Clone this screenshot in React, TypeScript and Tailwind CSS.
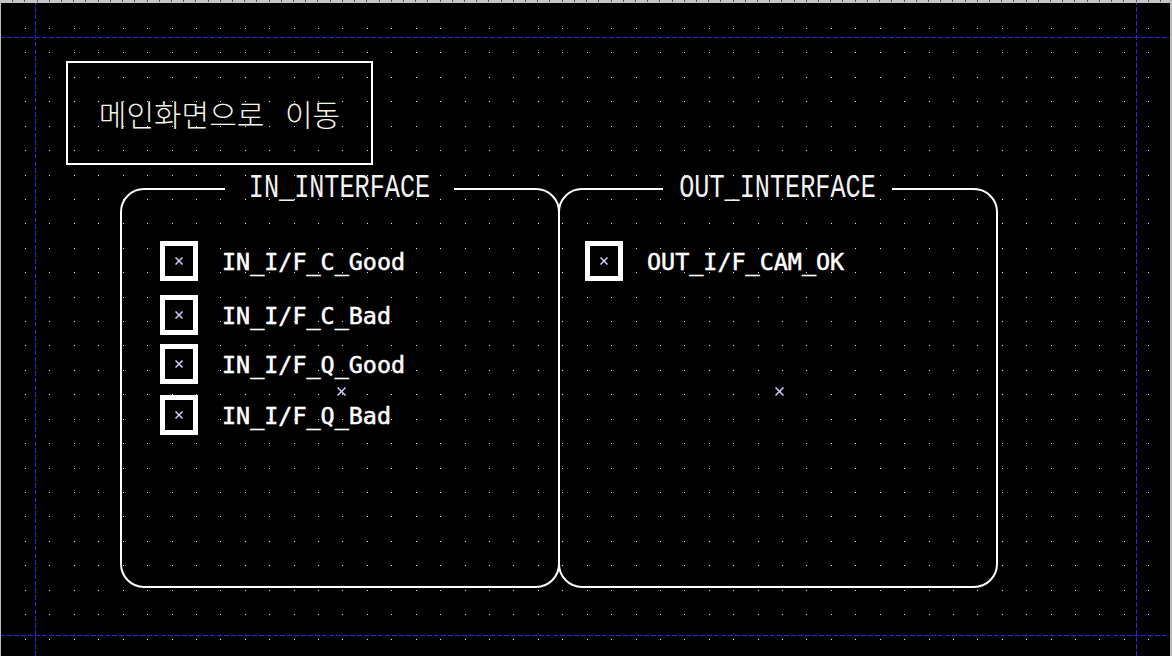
import React from "react";

const STEP = 24.42;
const BLUE = "#2626e6";

function Backdrop() {
  const dots: React.ReactElement[] = [];
  for (let r = 0; r < 27; r++) {
    for (let c = 0; c < 48; c++) {
      const x = Math.round(25 + c * STEP);
      const y = Math.round(28 + r * STEP);
      if (x < 1170 && y < 656) {
        dots.push(<rect key={`${r}-${c}`} x={x} y={y} width={1} height={1} fill="#e6e6e6" />);
      }
    }
  }
  const ticks: React.ReactElement[] = [];
  for (let i = 0; i < 96; i++) {
    const x = Math.round(i * 12.21);
    ticks.push(<rect key={`t${i}`} x={x} y={0} width={1} height={2} fill="#5a5a5a" />);
  }
  const hDash: React.ReactElement[] = [];
  const vDash: React.ReactElement[] = [];
  for (let x = 0; x < 1172; x += 7) {
    hDash.push(<rect key={`h1-${x}`} x={x} y={37} width={5} height={1} fill={BLUE} />);
    hDash.push(<rect key={`h2-${x}`} x={x} y={635} width={5} height={1} fill={BLUE} />);
  }
  for (let y = 0; y < 656; y += 7) {
    vDash.push(<rect key={`v1-${y}`} x={35} y={y} width={1} height={5} fill={BLUE} />);
    vDash.push(<rect key={`v2-${y}`} x={1136} y={y} width={1} height={5} fill={BLUE} />);
  }
  return (
    <svg className="absolute inset-0" width={1172} height={656} viewBox="0 0 1172 656" shapeRendering="crispEdges">
      {dots}
      {hDash}
      {vDash}
      <rect x={0} y={0} width={1172} height={3} fill="#c4c4c4" />
      {ticks}
      <rect x={0} y={0} width={1} height={656} fill="#bdbdbd" />
      <rect x={1170} y={0} width={2} height={656} fill="#bdbdbd" />
    </svg>
  );
}

function XMark({ size }: { size: number }) {
  const s = size - 0.5;
  return (
    <svg width={size} height={size} viewBox={`0 0 ${size} ${size}`}>
      <g stroke="#cfd0ff" strokeWidth={1.5}>
        <line x1={0.5} y1={0.5} x2={s} y2={s} />
        <line x1={s} y1={0.5} x2={0.5} y2={s} />
      </g>
    </svg>
  );
}

type Item = { label: string; mt: string };

function Row({ label, mt, labelGap }: { label: string; mt: string; labelGap: string }) {
  return (
    <div className={`flex items-center ${mt}`}>
      <div className="w-[38px] h-[40px] border-[5px] border-white bg-black flex items-center justify-center shrink-0">
        <XMark size={8} />
      </div>
      <span
        className={`${labelGap} pt-[4px] text-white text-[23.4px] leading-none whitespace-nowrap [-webkit-text-stroke:0.5px_white]`}
        style={{ fontFamily: '"DejaVu Sans Mono", monospace' }}
      >
        {label}
      </span>
    </div>
  );
}

function Group({
  title,
  items,
  padLeft,
  labelGap,
  extra,
}: {
  title: string;
  items: Item[];
  padLeft: string;
  labelGap: string;
  extra?: string;
}) {
  return (
    <div className={`relative w-[440px] h-[413px] shrink-0 ${extra ?? ""}`}>
      <fieldset className="w-full h-full border-2 border-white rounded-[24px] m-0 p-0 min-w-0">
        <legend className="ml-[103px] w-[229px] h-[28px] p-0 flex items-center justify-center">
          <span
            className="block text-[#f2f2f2] text-[25.2px] leading-none scale-y-[1.3] whitespace-nowrap"
            style={{ fontFamily: '"Liberation Mono", monospace' }}
          >
            {title}
          </span>
        </legend>
        <div className={`flex flex-col ${padLeft}`}>
          {items.map((it) => (
            <Row key={it.label} label={it.label} mt={it.mt} labelGap={labelGap} />
          ))}
        </div>
      </fieldset>
      <div className="absolute left-[217px] top-[212px]">
        <XMark size={9} />
      </div>
    </div>
  );
}

export default function App() {
  return (
    <div className="relative w-[1172px] h-[656px] bg-black overflow-hidden">
      <Backdrop />
      <div className="relative flex flex-col">
        <div className="mt-[61px] ml-[66px] w-[307px] h-[104px] border-2 border-white flex items-center justify-center">
          <span
            className="text-[#f6f4e6] text-[30px] font-light leading-none [word-spacing:14px] whitespace-nowrap"
            style={{ fontFamily: '"Noto Sans CJK KR", "Noto Sans", sans-serif' }}
          >
            메인화면으로 이동
          </span>
        </div>
        <div className="flex mt-[10px] ml-[120px]">
          <Group
            title="IN_INTERFACE"
            padLeft="pl-[38px]"
            labelGap="ml-[24px]"
            items={[
              { label: "IN_I/F_C_Good", mt: "mt-[38px]" },
              { label: "IN_I/F_C_Bad", mt: "mt-[14px]" },
              { label: "IN_I/F_Q_Good", mt: "mt-[9px]" },
              { label: "IN_I/F_Q_Bad", mt: "mt-[11px]" },
            ]}
          />
          <Group
            title="OUT_INTERFACE"
            padLeft="pl-[25px]"
            labelGap="ml-[24px]"
            extra="-ml-[2px]"
            items={[{ label: "OUT_I/F_CAM_OK", mt: "mt-[38px]" }]}
          />
        </div>
      </div>
    </div>
  );
}
